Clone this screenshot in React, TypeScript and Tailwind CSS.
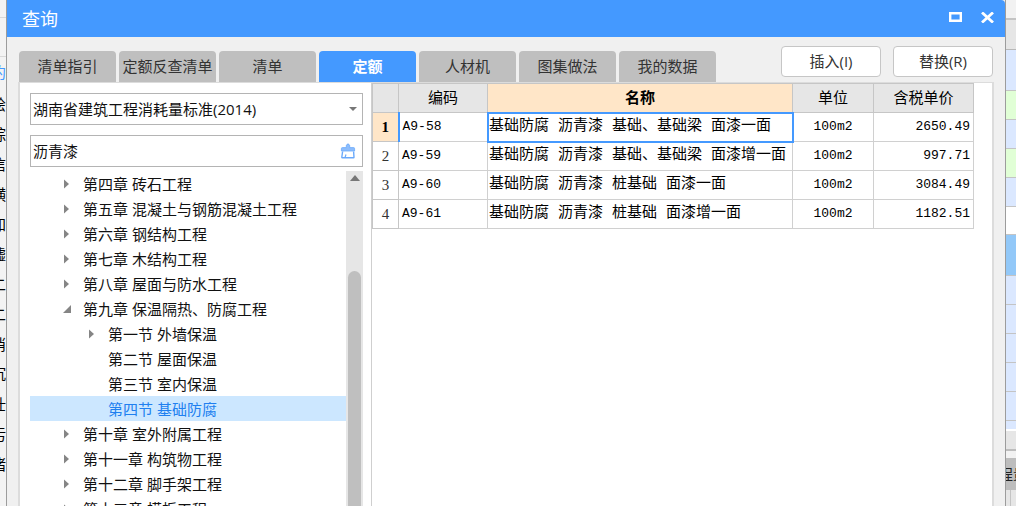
import { useState } from "react";
import clsx from "clsx";

type TreeNode = { label: string; depth: 0 | 1; arrow?: "closed" | "open" };
type QuotaRow = { code: string; name: string; unit: string; price: string };

const TABS = ["清单指引", "定额反查清单", "清单", "定额", "人材机", "图集做法", "我的数据"];

const TREE: TreeNode[] = [
  { label: "第四章 砖石工程", depth: 0, arrow: "closed" },
  { label: "第五章 混凝土与钢筋混凝土工程", depth: 0, arrow: "closed" },
  { label: "第六章 钢结构工程", depth: 0, arrow: "closed" },
  { label: "第七章 木结构工程", depth: 0, arrow: "closed" },
  { label: "第八章 屋面与防水工程", depth: 0, arrow: "closed" },
  { label: "第九章 保温隔热、防腐工程", depth: 0, arrow: "open" },
  { label: "第一节 外墙保温", depth: 1, arrow: "closed" },
  { label: "第二节 屋面保温", depth: 1 },
  { label: "第三节 室内保温", depth: 1 },
  { label: "第四节 基础防腐", depth: 1 },
  { label: "第十章 室外附属工程", depth: 0, arrow: "closed" },
  { label: "第十一章 构筑物工程", depth: 0, arrow: "closed" },
  { label: "第十二章 脚手架工程", depth: 0, arrow: "closed" },
  { label: "第十三章 模板工程", depth: 0, arrow: "closed" },
];

const ROWS: QuotaRow[] = [
  { code: "A9-58", name: "基础防腐 沥青漆 基础、基础梁 面漆一面", unit: "100m2", price: "2650.49" },
  { code: "A9-59", name: "基础防腐 沥青漆 基础、基础梁 面漆增一面", unit: "100m2", price: "997.71" },
  { code: "A9-60", name: "基础防腐 沥青漆 桩基础 面漆一面", unit: "100m2", price: "3084.49" },
  { code: "A9-61", name: "基础防腐 沥青漆 桩基础 面漆增一面", unit: "100m2", price: "1182.51" },
];

const LEFT_TEXT = ["绘", "综", "信", "横", "加", "墟", "二", "二", "消", "沉", "壮", "污", "堵"];

function TreeArrow({ kind }: { kind?: "closed" | "open" }) {
  return (
    <svg className="h-2.5 w-2.5 shrink-0" viewBox="0 0 10 10" fill="#858585" aria-hidden="true">
      {kind === "closed" && <path d="M2 0.5 7 5 2 9.5Z" />}
      {kind === "open" && <path d="M9 1V9H1Z" />}
    </svg>
  );
}

function BrushIcon() {
  return (
    <svg className="h-4 w-4" viewBox="0 0 16 16" fill="none" stroke="#6aa9fb" aria-hidden="true">
      <path d="M6.3 2.2Q8 -0.6 9.7 2.2V4.6H13.6Q14.6 4.6 14.6 5.6V8H1.4V5.6Q1.4 4.6 2.4 4.6H6.3Z" fill="#8dbdfc" strokeWidth="0.8" />
      <path d="M2.6 8.5 1.8 14.2Q1.8 14.8 2.4 14.8H13.4Q14 14.8 14 14.2L13.6 8.5" strokeWidth="1.4" />
      <path d="M5 14.5 6 11.5" strokeWidth="1.2" />
    </svg>
  );
}

function BackgroundLeft() {
  return (
    <div className="flex w-[7px] shrink-0 flex-col items-end overflow-hidden border-r border-[#9c9c9c] bg-[#f3f3f3] text-[15px] leading-[30px] text-black">
      <span className="h-[18px] w-full shrink-0 border-b border-[#d8d8d8]" />
      <span className="mt-[38px] h-[33px] shrink-0 border-t border-[#d8d8d8] text-[#4499ff]">约</span>
      {LEFT_TEXT.map((t, i) => (
        <span key={i} className="h-[30px] shrink-0">
          {t}
        </span>
      ))}
    </div>
  );
}

function BackgroundRight() {
  return (
    <div className="flex w-[11px] shrink-0 flex-col overflow-hidden border-l border-[#9c9c9c] bg-[#e6e6e6] text-[15px]">
      <div className="h-5 shrink-0 border-b-2 border-[#c4c4c4] bg-[#f2f2f2]" />
      <div className="h-[30px] shrink-0 border-b border-[#b8b8b8] bg-[#e6e6e6]" />
      <div className="h-[41px] shrink-0 border-b border-[#c4c4c4] bg-[#dbe8ff]" />
      <div className="h-[29px] shrink-0 border-b border-[#c4c4c4] bg-[#e1ffd6]" />
      <div className="h-[29px] shrink-0 border-b border-[#c4c4c4] bg-[#dbe8ff]" />
      <div className="h-[29px] shrink-0 border-b border-[#c4c4c4] bg-[#e1ffd6]" />
      <div className="h-[29px] shrink-0 border-b border-[#c4c4c4] bg-[#dbe8ff]" />
      <div className="h-7 shrink-0 border-b border-[#c4c4c4] bg-white" />
      <div className="h-[41px] shrink-0 border-b border-[#c4c4c4] bg-[#92c8f8]" />
      {[0, 1, 2, 3, 4].map((n) => (
        <div key={n} className="h-[29px] shrink-0 border-b border-[#c4c4c4] bg-[#dbe8ff]" />
      ))}
      <div className="h-[10px] shrink-0 border-b-2 border-white bg-[#dbe8ff]" />
      <div className="h-5 shrink-0 border-b-2 border-[#bdbdbd] bg-[#e6e6e6]" />
      <div className="h-[7px] shrink-0 bg-[#f2f2f2]" />
      <div className="h-8 shrink-0 bg-[#bdbdbd] leading-8 whitespace-nowrap text-[#222]">
        <span className="-ml-2">程量</span>
      </div>
      <div className="ml-1 flex-1 border-l border-[#c4c4c4]" />
    </div>
  );
}

function QuotaTree({ selected, onSelect }: { selected: string; onSelect: (label: string) => void }) {
  return (
    <div className="mt-1 flex min-h-0 flex-1">
      <ul className="min-w-0 flex-1 overflow-hidden">
        {TREE.map((n) => (
          <li key={n.label}>
            <button
              type="button"
              onClick={() => onSelect(n.label)}
              className={clsx(
                "flex h-[25px] w-full items-center gap-[11px] text-left whitespace-nowrap",
                n.depth === 0 ? "pl-8" : "pl-[57px]",
                n.label === selected ? "bg-[#cce7ff] text-[#2080f0]" : "text-[#111]",
              )}
            >
              <TreeArrow kind={n.arrow} />
              {n.label}
            </button>
          </li>
        ))}
      </ul>
      <div className="flex w-[17px] shrink-0 flex-col items-center bg-[#e6e6e6]">
        <svg className="mt-1 h-1.5 w-2.5 shrink-0" viewBox="0 0 10 6" fill="#777" aria-hidden="true">
          <path d="M0 6 5 0 10 6Z" />
        </svg>
        <div className="mt-[90px] w-[13px] flex-1 rounded-t-full bg-[#bfbfbf]" />
      </div>
    </div>
  );
}

function QuotaTable() {
  const head = "h-[29px] border border-[#c6c6c6] bg-[#e6e6e6] px-0 pt-[3px] pb-0 font-normal";
  const cell = "h-[29px] border border-[#d0d0d0] p-0";
  return (
    <table className="w-[602px] table-fixed border-collapse font-['Liberation_Mono','Noto_Sans_CJK_SC',monospace] text-[15px] leading-5 text-black">
      <colgroup>
        <col className="w-[26px]" />
        <col className="w-[89px]" />
        <col className="w-[305px]" />
        <col className="w-[81px]" />
        <col className="w-[100px]" />
      </colgroup>
      <thead>
        <tr>
          <th className={head} aria-label="#" />
          <th className={head}>编码</th>
          <th className="h-[29px] border border-[#c6c6c6] bg-[#ffe6c8] px-0 pt-[3px] pb-0 font-bold">名称</th>
          <th className={head}>单位</th>
          <th className={head}>含税单价</th>
        </tr>
      </thead>
      <tbody>
        {ROWS.map((r, i) => (
          <tr key={r.code}>
            <th
              className={clsx(
                "h-[29px] border border-[#c6c6c6] p-0 font-['Liberation_Serif',serif] text-[15px]",
                i === 0 ? "border-r-2 border-r-[#4499ff] bg-[#ffe6c8] font-bold" : "font-normal text-[#333]",
              )}
            >
              {i + 1}
            </th>
            <td className={clsx(cell, "pl-[3px] text-[13px]")}>{r.code}</td>
            <td
              className={clsx(
                cell,
                "pl-px whitespace-nowrap",
                i === 0 && "outline-2 -outline-offset-1 outline-[#4499ff]",
              )}
            >
              {r.name}
            </td>
            <td className={clsx(cell, "text-center text-[13px]")}>{r.unit}</td>
            <td className={clsx(cell, "pr-[3px] text-right text-[13px]")}>{r.price}</td>
          </tr>
        ))}
      </tbody>
    </table>
  );
}

export default function App() {
  const [tab, setTab] = useState("定额");
  const [keyword, setKeyword] = useState("沥青漆");
  const [selected, setSelected] = useState("第四节 基础防腐");

  return (
    <div className="flex h-screen overflow-hidden bg-[#f0f0f0] font-['Open_Sans','Noto_Sans_CJK_SC',sans-serif] text-[15px] leading-5">
      <BackgroundLeft />
      <main className="flex min-w-0 flex-1 flex-col">
        <header className="flex h-[37px] shrink-0 items-center justify-between rounded-tr bg-[#4499ff] pr-[11px] pl-[15px] text-white">
          <h1 className="text-[18px]">查询</h1>
          <div className="flex items-center gap-[19px]">
            <button type="button" aria-label="最大化" className="mb-[3px]">
              <svg className="h-[10px] w-[13px]" viewBox="0 0 13 10" fill="none" stroke="white" strokeWidth="2.4">
                <path d="M1.2 1.2H11.8V8.8H1.2Z" />
              </svg>
            </button>
            <button type="button" aria-label="关闭" className="mb-[3px]">
              <svg className="h-[11px] w-[13px]" viewBox="0 0 13 11" stroke="white" strokeWidth="2.8">
                <path d="M1 0.5 12 10.5M12 0.5 1 10.5" />
              </svg>
            </button>
          </div>
        </header>

        <div className="flex shrink-0 items-end justify-between pt-[9px] pr-3 pl-3">
          <nav className="flex gap-[3px]">
            {TABS.map((t) => (
              <button
                key={t}
                type="button"
                onClick={() => setTab(t)}
                className={clsx(
                  "h-[31px] w-[97px] rounded-t-sm pb-0.5 whitespace-nowrap",
                  t === tab ? "bg-[#4499ff] font-bold text-white" : "bg-[#bfbfbf] text-[#333]",
                )}
              >
                {t}
              </button>
            ))}
          </nav>
          <div className="flex gap-3 pb-[5px]">
            <button type="button" className="h-[31px] w-[100px] rounded-sm border border-[#c6c6c6] bg-white pb-0.5 text-[#333]">
              插入(I)
            </button>
            <button type="button" className="h-[31px] w-[100px] rounded-sm border border-[#c6c6c6] bg-white pb-0.5 text-[#333]">
              替换(R)
            </button>
          </div>
        </div>

        <div className="mr-[11px] ml-[11px] flex min-h-0 flex-1 border-t border-r-2 border-l-2 border-[#dcdcdc] bg-white">
          <aside className="flex w-[352px] shrink-0 flex-col border-r border-[#cfcfcf] pt-2.5 pr-2 pl-2.5">
            <div className="relative">
              <select
                aria-label="定额库"
                className="h-8 w-full appearance-none border border-[#b4b4b4] bg-white pl-0.5 text-[#111]"
              >
                <option>湖南省建筑工程消耗量标准(2014)</option>
              </select>
              <svg
                className="pointer-events-none absolute top-[14px] right-1.5 h-1 w-2"
                viewBox="0 0 8 4"
                fill="#777"
                aria-hidden="true"
              >
                <path d="M0 0H8L4 4Z" />
              </svg>
            </div>
            <div className="mt-2.5 flex h-8 shrink-0 items-center border border-[#b4b4b4] pr-1.5 pl-0.5">
              <input
                aria-label="查询关键字"
                value={keyword}
                onChange={(e) => setKeyword(e.target.value)}
                className="min-w-0 flex-1 text-[#111] outline-none"
              />
              <button type="button" aria-label="清空" onClick={() => setKeyword("")}>
                <BrushIcon />
              </button>
            </div>
            <QuotaTree selected={selected} onSelect={setSelected} />
          </aside>
          <section className="min-w-0 flex-1 overflow-hidden">
            <QuotaTable />
          </section>
        </div>
      </main>
      <BackgroundRight />
    </div>
  );
}
